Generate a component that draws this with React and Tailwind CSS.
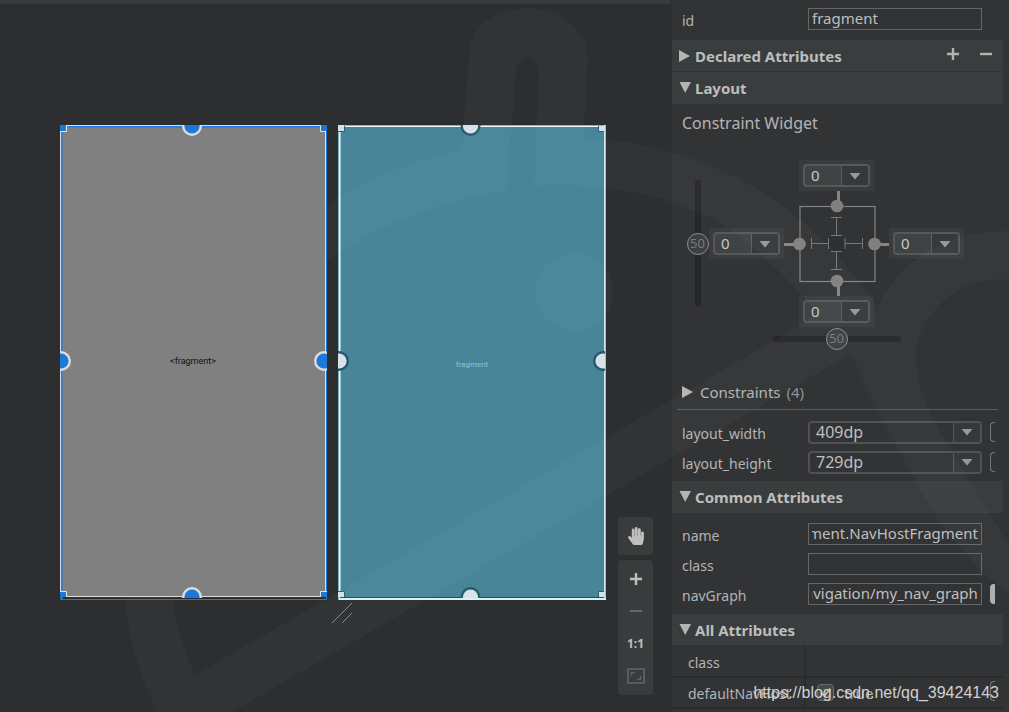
import React, { useEffect, useRef } from "react";
import { FaHandPaper } from "react-icons/fa";

function Backdrop() {
  return (
    <svg
      className="pointer-events-none absolute inset-0 z-10 h-full w-full"
      viewBox="0 0 1009 712"
      preserveAspectRatio="xMinYMin slice"
      fill="#ffffff"
      fillOpacity="0.026"
      aria-hidden="true"
    >
      <path
        fillRule="evenodd"
        d="M320 210 Q385 165 462 150 L469 56 C472 -8 584 -8 588 58 L583 138 Q655 142 712 166 C780 194 830 240 878 307 C900 258 950 230 1009 231 L1009 280 C962 274 918 312 916 355 C916 405 945 438 1009 545 L1009 592 C985 580 965 550 946 532 Q900 460 851 354 L232 712 L158 712 Q130 660 124 590 L171 590 Q178 640 195 675 L801 325 L816 312 Q765 250 715 220 Q635 180 534 186 L539 72 C538 52 518 52 516 72 L506 190 Q405 206 320 265 Z"
      />
      <circle cx="574" cy="292" r="39" />
    </svg>
  );
}

function WidgetFrame() {
  return (
    <div className="relative z-20 h-[475px] w-[268px]">
      <svg className="absolute inset-0 h-full w-full" viewBox="0 0 268 475" aria-hidden="true">
        <path d="M1 474.5H267" stroke="#1c78da" />
        <rect x="1" y="1" width="265" height="470" fill="#808080" />
        <path d="M1.500 0V475M0 1.500H266" stroke="#1f7ee8" strokeWidth="2" />
        <path d="M266.500 1V475" stroke="#1c78da" />
        <rect x="0.500" y="0.500" width="265" height="471" fill="none" stroke="#dcdcdc" />
        <path d="M0 0H6V6H0ZM261 0H267V6H261ZM0 467H6V472H0ZM261 467H267V472H261Z" fill="#1c78da" />
        <path d="M6.500 1V6.500H0M260.500 1V6.500H266M0 466.500H6.500V471M267 466.500H260.500V471" fill="none" stroke="#e4e4e4" />
        <svg width="267" height="473" viewBox="0 0 267 473" x="0" y="0" fill="#1c78da" stroke="#dcdcdc" strokeWidth="2.400">
          <circle cx="132" cy="1" r="8.800" />
          <circle cx="1" cy="236" r="8.800" />
          <circle cx="264" cy="236" r="8.800" />
          <circle cx="132" cy="472" r="8.800" />
        </svg>
      </svg>
      <div className="relative flex h-full items-center justify-center pr-[2px] pb-[3px] font-['Roboto',sans-serif] text-[9px] leading-3 text-[#111111]">
        &lt;fragment&gt;
      </div>
    </div>
  );
}

function BlueprintFrame() {
  return (
    <div className="relative h-[475px] w-[268px]">
      <svg className="absolute inset-0 h-full w-full" viewBox="0 0 268 475" aria-hidden="true">
        <rect width="268" height="475" fill="#488598" />
        <path d="M0 0.500H268M0.500 0V475" stroke="#7fb3c2" />
        <path d="M0 1.500H266" stroke="#f2fafc" />
        <path d="M1.800 0V474" stroke="#d9f3f7" strokeWidth="1.600" />
        <path d="M266.800 0V475" stroke="#cdeaf0" strokeWidth="1.600" />
        <path d="M2 472.500H266" stroke="#234e5e" />
        <path d="M1 474H268" stroke="#d5f2f6" strokeWidth="2" />
        <path d="M6.500 1V6.500H0M260.500 1V6.500H266M0 466.500H6.500V472M266 466.500H260.500V472" fill="none" stroke="#2c6072" />
        <path d="M0 0H6V6H0ZM261 1H266V6H261ZM0 467H6V472H0ZM261 467H266V472H261Z" fill="#d3e2e9" />
        <svg width="267" height="473" viewBox="0 0 267 473" x="0" y="0" fill="#d6e3ea" stroke="#28596b" strokeWidth="2.400">
          <circle cx="132.500" cy="1" r="8.800" />
          <circle cx="1" cy="236" r="8.800" />
          <circle cx="265" cy="236" r="8.800" />
          <circle cx="132.500" cy="472" r="8.800" />
        </svg>
      </svg>
      <div className="relative flex h-full items-center justify-center pt-1 font-['Roboto',sans-serif] text-[8px] leading-3 text-[#83c6d8]">
        fragment
      </div>
    </div>
  );
}

function ZoomTools() {
  return (
    <div className="absolute right-[18px] bottom-[17px] flex w-[35px] flex-col gap-[5px] text-[#bfbfbf]">
      <button aria-label="Pan" className="flex h-[38px] items-center justify-center rounded bg-[#393c3d]">
        <FaHandPaper className="size-[18px]" />
      </button>
      <div className="flex flex-col items-center rounded bg-[#393c3d] py-[3px]">
        <button aria-label="Zoom in" className="flex h-8 w-full items-center justify-center">
          <svg width="14" height="14" viewBox="0 0 14 14" stroke="currentColor" strokeWidth="2.400">
            <path d="M7 1V13M1 7H13" />
          </svg>
        </button>
        <button aria-label="Zoom out" className="flex h-8 w-full items-center justify-center text-[#656768]">
          <svg width="14" height="14" viewBox="0 0 14 14" stroke="currentColor" strokeWidth="2">
            <path d="M1 7H13" />
          </svg>
        </button>
        <button className="flex h-8 w-full items-center justify-center pt-[2px] font-['Noto_Sans',sans-serif] text-xs font-bold">
          1:1
        </button>
        <button aria-label="Zoom to fit" className="flex h-[33px] w-full items-center justify-center text-[#626465]">
          <svg width="18" height="16" viewBox="0 0 18 16" fill="none" stroke="currentColor">
            <path d="M1 1H17V15H1Z" strokeWidth="1.600" />
            <path d="M4.500 7.500V4.500H8M13.500 8V11.500H10" strokeWidth="1.300" />
          </svg>
        </button>
      </div>
    </div>
  );
}

function Canvas() {
  return (
    <main className="relative min-w-0 flex-1 border-t-4 border-[#393a3c] bg-[#2d2e30]">
      <div className="flex gap-[10px] pt-[121px] pl-[60px]">
        <WidgetFrame />
        <BlueprintFrame />
      </div>
      <svg className="mt-[2px] ml-[331px]" width="22" height="22" viewBox="0 0 22 22" stroke="#85878a" aria-hidden="true">
        <path d="M1 21L21 1M11 21L21 11" />
      </svg>
      <ZoomTools />
    </main>
  );
}

function Arrow({ down }) {
  return (
    <svg className="shrink-0" width="12" height="12" viewBox="0 0 12 12" fill="#b4b4b4" aria-hidden="true">
      {down ? <path d="M0.500 0H12L6.200 11Z" /> : <path d="M0 0L11 6L0 12Z" />}
    </svg>
  );
}

function Caret() {
  return (
    <svg width="12" height="7" viewBox="0 0 12 7" fill="#96989a" aria-hidden="true">
      <path d="M0.500 0H11.500L6 6.500Z" />
    </svg>
  );
}

function SectionHeader({ title, open, className, children }) {
  return (
    <div className={"mr-[6px] flex items-center bg-[#393d3e] text-[#bdbdbd] " + className}>
      <button className="flex items-center gap-1 pl-[7px] text-[15px] leading-6 font-bold">
        <Arrow down={open} />
        <h2>{title}</h2>
      </button>
      {children}
    </div>
  );
}

function MarginSelect({ label, className = "" }) {
  return (
    <div className={"bg-[#393b3d] p-1 " + className}>
      <div className="relative flex h-[23px] rounded border-2 border-[#56585a] bg-[#3f4345]">
        <select aria-label={label} className="h-full w-full appearance-none bg-transparent pl-[6px] text-[15px] leading-[19px] text-[#c8c8c8] outline-none">
          <option>0</option>
        </select>
        <span className="pointer-events-none absolute inset-y-0 right-0 flex w-[27px] items-center justify-center border-l border-[#5c5e60] bg-[#36393b] pt-[2px]">
          <Caret />
        </span>
      </div>
    </div>
  );
}

function Bias({ label, vertical }) {
  return (
    <label
      className={
        "relative flex items-center justify-center " + (vertical ? "h-[127px] w-[23px]" : "h-[23px] w-[128px]")
      }
    >
      <span className={"absolute rounded-sm bg-[#262729] " + (vertical ? "h-full w-[6px]" : "h-[6px] w-full")} />
      <span className="relative flex size-[22px] items-center justify-center rounded-full border border-[#8a8c8e] bg-[#3c4042] pt-px text-[13px] text-[#77797b]">
        50
      </span>
      <input type="range" min="0" max="100" defaultValue="50" aria-label={label} className="absolute inset-0 h-full w-full opacity-0" />
    </label>
  );
}

function ConstraintWidget() {
  return (
    <div className="flex items-center pt-[27px] pl-[14px] pb-[29px]">
      <div className="pb-[23px]">
        <Bias label="Vertical bias" vertical />
      </div>
      <div className="flex flex-col items-center">
        <div className="grid grid-cols-[75px_105px_75px] grid-rows-[31px_105px_31px] items-center">
          <MarginSelect label="Top margin" className="col-start-2 mx-[15px]" />
          <MarginSelect label="Left margin" className="col-start-1 row-start-2" />
          <svg className="col-start-2 row-start-2" width="105" height="105" viewBox="0 0 105 105" fill="none" aria-hidden="true">
            <rect x="16" y="15.500" width="75" height="75" stroke="#828486" strokeWidth="1.200" />
            <path d="M54.500 0V15M54.500 90V105M0 53.500H15M91 53.500H105" stroke="#858585" strokeWidth="3" />
            <g fill="#808080">
              <circle cx="53" cy="15" r="6.300" />
              <circle cx="53" cy="90" r="6.300" />
              <circle cx="15.500" cy="53" r="6.300" />
              <circle cx="90.500" cy="53" r="6.300" />
            </g>
            <path
              d="M47 26.500H58M52.500 26.500V44.500M47 44.500H58M47 60.500H58M52.500 60.500V78.500M47 78.500H58M27.500 47V58M27.500 52.500H44.500M44.500 47V58M61 47V58M61 52.500H78.500M78.500 47V58"
              stroke="#77797a"
            />
            <rect x="45" y="45" width="15" height="15" fill="#2f3032" />
          </svg>
          <MarginSelect label="Right margin" className="col-start-3 row-start-2" />
          <MarginSelect label="Bottom margin" className="col-start-2 row-start-3 mx-[15px]" />
        </div>
        <Bias label="Horizontal bias" />
      </div>
    </div>
  );
}

function Pill({ filled }) {
  return (
    <button
      aria-label="Pick a resource"
      className={
        "ml-2 h-5 w-[5px] shrink-0 rounded-l-[4px] " +
        (filled ? "bg-[#adafb1]" : "border border-r-0 border-[#757779]")
      }
    />
  );
}

function TextRow({ label, value = "", pill }) {
  const field = useRef(null);
  useEffect(() => {
    field.current.scrollLeft = field.current.scrollWidth;
  }, []);
  const id = "field-" + label + value.length;
  return (
    <div className="flex h-[30px] items-center pl-[10px]">
      <label htmlFor={id} className="w-[126px] shrink-0 pt-[3px] text-sm">
        {label}
      </label>
      <input
        id={id}
        ref={field}
        defaultValue={value}
        className="h-[22px] w-[174px] border border-[#646668] bg-transparent px-[3px] pb-[2px] text-[15px] leading-5 text-[#bfbfbf] outline-none"
      />
      {pill && <Pill filled />}
    </div>
  );
}

function SizeRow({ label, value }) {
  return (
    <div className="flex h-[30px] items-center pl-[10px]">
      <label htmlFor={label} className="w-[126px] shrink-0 pt-[3px] text-sm">
        {label}
      </label>
      <div className="relative h-[23px] w-[174px] rounded border-2 border-[#505254]">
        <select id={label} className="block h-full w-full appearance-none bg-transparent pl-[6px] text-[16px] leading-[19px] text-[#bfbfbf] outline-none">
          <option>{value}</option>
        </select>
        <span className="pointer-events-none absolute inset-y-0 right-0 flex w-[27px] items-center justify-center border-l border-[#55575a] bg-[#36393b]">
          <Caret />
        </span>
      </div>
      <Pill />
    </div>
  );
}

function AttributesPanel() {
  return (
    <aside className="w-[338px] shrink-0 overflow-hidden border-l border-[#2d2e30] bg-[#323335] text-[#b4b4b4]">
      <div className="pt-1 pb-[6px]">
        <TextRow label="id" value="fragment" />
      </div>
      <SectionHeader title="Declared Attributes" className="h-[31px]">
        <div className="ml-auto flex gap-[17px] pr-[9px] pb-1">
          <button aria-label="Add attribute">
            <svg width="16" height="16" viewBox="0 0 16 16" stroke="#b4b4b4" strokeWidth="2.400">
              <path d="M8 2V14M2 8H14" />
            </svg>
          </button>
          <button aria-label="Remove attribute">
            <svg width="16" height="16" viewBox="0 0 16 16" stroke="#b4b4b4" strokeWidth="2.400">
              <path d="M2 8H14" />
            </svg>
          </button>
        </div>
      </SectionHeader>
      <SectionHeader title="Layout" open className="mt-px h-8" />
      <h3 className="pt-[9px] pl-[10px] text-[16px] leading-5">Constraint Widget</h3>
      <ConstraintWidget />
      <button className="flex h-[26px] items-center gap-[6px] pl-[10px] text-[15px] leading-5">
        <Arrow />
        <span>Constraints</span>
        <span className="text-[#909294]">(4)</span>
      </button>
      <div className="mt-[4px] mr-[11px] mb-[7px] ml-[5px] border-t border-[#5a5c5e]" />
      <SizeRow label="layout_width" value="409dp" />
      <SizeRow label="layout_height" value="729dp" />
      <SectionHeader title="Common Attributes" open className="mt-1 h-8" />
      <div className="pt-[6px] pb-[5px]">
        <TextRow label="name" value="androidx.navigation.fragment.NavHostFragment" />
        <TextRow label="class" />
        <TextRow label="navGraph" value="@navigation/my_nav_graph" pill />
      </div>
      <SectionHeader title="All Attributes" open className="h-[31px]" />
      <table className="w-[331px] border-collapse text-sm">
        <tbody>
          <tr className="h-8 border-b-2 border-[#2a2b2d]">
            <th scope="row" className="w-[133px] border-r-2 border-[#2a2b2d] pt-1 pl-4 text-left font-normal">class</th>
            <td />
          </tr>
          <tr className="h-[31px] border-b-2 border-[#2a2b2d]">
            <th scope="row" className="border-r-2 border-[#2a2b2d] pt-[2px] pl-4 text-left font-normal">defaultNavHost</th>
            <td>
              <div className="flex items-center">
                <label className="flex flex-1 items-center gap-[10px] pl-[11px] text-[15px] leading-5">
                  <span className="relative flex size-[17px]">
                    <input type="checkbox" defaultChecked className="size-[17px] appearance-none rounded-sm border border-[#6b6d6f] bg-[#46494b]" />
                    <svg className="pointer-events-none absolute inset-0" width="17" height="17" viewBox="0 0 17 17" fill="none" stroke="#b4b4b4" strokeWidth="2">
                      <path d="M4 8.500L7.500 12L13 4.500" />
                    </svg>
                  </span>
                  true
                </label>
                <span className="mr-[8px]">
                  <Pill />
                </span>
              </div>
            </td>
          </tr>
        </tbody>
      </table>
    </aside>
  );
}

export default function App() {
  return (
    <div className="relative flex min-h-screen overflow-hidden bg-[#2d2e30] font-['Noto_Sans',sans-serif]">
      <Canvas />
      <AttributesPanel />
      <Backdrop />
      <p className="pointer-events-none absolute right-[10px] bottom-[9px] z-30 font-['Liberation_Sans',sans-serif] text-base leading-5 text-[#d0d0d0]">
        https://blog.csdn.net/qq_39424143
      </p>
    </div>
  );
}
